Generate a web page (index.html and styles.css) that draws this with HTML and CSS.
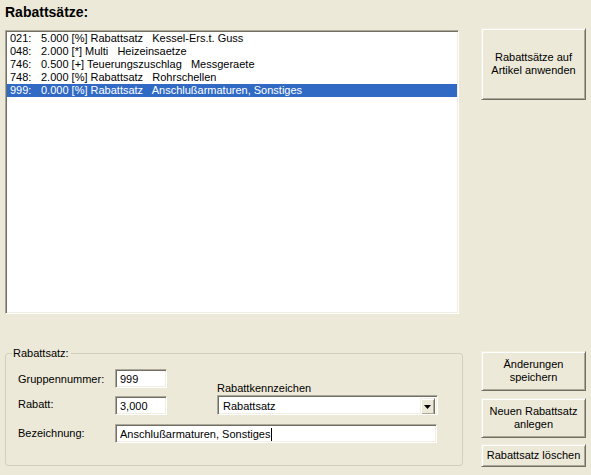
FILE: index.html
```html
<!DOCTYPE html>
<html>
<head>
    <title>Rabattsätze</title>
    <link rel="stylesheet" href="styles.css">
</head>
<body>
    <div class="window">
        <h1 class="title">Rabattsätze:</h1>

        <div class="top">
            <div class="listbox">
                <div class="item"><span class="code">021:</span>5.000 [%] Rabattsatz   Kessel-Ers.t. Guss</div>
                <div class="item"><span class="code">048:</span>2.000 [*] Multi   Heizeinsaetze</div>
                <div class="item"><span class="code">746:</span>0.500 [+] Teuerungszuschlag   Messgeraete</div>
                <div class="item"><span class="code">748:</span>2.000 [%] Rabattsatz   Rohrschellen</div>
                <div class="item selected"><span class="code">999:</span>0.000 [%] Rabattsatz   Anschlußarmaturen, Sonstiges</div>
            </div>
            <div class="side">
                <button class="btn apply">Rabattsätze auf<br>Artikel anwenden</button>
            </div>
        </div>

        <div class="bottom">
            <fieldset class="group">
                <legend>Rabattsatz:</legend>
                <div class="form">
                    <div class="lbl lbl-nr">Gruppennummer:</div>
                    <div class="field">999</div>
                    <div class="lbl lbl-kz">Rabattkennzeichen</div>

                    <div class="lbl lbl-rabatt">Rabatt:</div>
                    <div class="field">3,000</div>
                    <div class="combo">
                        <span class="combo-text">Rabattsatz</span>
                        <span class="combo-btn">
                            <svg width="7" height="4" viewBox="0 0 7 4"><path d="M0 0h7L3.5 4z" fill="#000"/></svg>
                        </span>
                    </div>

                    <div class="lbl lbl-bez">Bezeichnung:</div>
                    <div class="field wide">Anschlußarmaturen, Sonstiges<span class="caret"></span></div>
                </div>
            </fieldset>

            <div class="side actions">
                <button class="btn tall">Änderungen<br>speichern</button>
                <button class="btn tall">Neuen Rabattsatz<br>anlegen</button>
                <button class="btn small">Rabattsatz löschen</button>
            </div>
        </div>
    </div>
</body>
</html>
```

FILE: styles.css
```css
body {
    margin: 0;
    background-color: #ece9d8;
    font-family: "Liberation Sans", Arial, sans-serif;
    font-size: 11px;
    line-height: 13px;
    color: #000;
}

.window {
    width: 591px;
    height: 475px;
    padding: 0 5px;
    box-sizing: border-box;
}

.title {
    margin: 0;
    height: 28px;
    padding: 5px 0 0 0;
    box-sizing: border-box;
    font-size: 14px;
    line-height: 15px;
    font-weight: bold;
}

/* top part: list + apply button */

.top {
    display: flex;
    align-items: flex-start;
}

.listbox {
    width: 454px;
    height: 284px;
    margin-top: 2px;
    box-sizing: border-box;
    background-color: #fff;
    border: 1px solid;
    border-color: #aca899 #fff #fff #aca899;
    box-shadow: inset 1px 1px #716f64, inset -1px -1px #f1efe2;
    padding: 1px 1px 0 1px;
    overflow: hidden;
}

.item {
    height: 13px;
    padding-left: 3px;
    white-space: pre;
}

.item.selected {
    background-color: #316ac5;
    color: #fff;
}

.code {
    display: inline-block;
    width: 31px;
}

.top .side {
    margin-left: 22px;
}

/* classic raised button */

.btn {
    display: block;
    width: 105px;
    padding: 0;
    font-family: inherit;
    font-size: 11px;
    line-height: 13px;
    color: #000;
    text-align: center;
    background-color: #ece9d8;
    border: 1px solid;
    border-color: #f1efe2 #716f64 #716f64 #f1efe2;
    box-shadow: inset 1px 1px #fff, inset -1px -1px #aca899;
}

.btn.apply {
    height: 72px;
}

.btn.tall {
    height: 40px;
}

.btn.small {
    height: 23px;
}

/* bottom part: group box + action buttons */

.bottom {
    display: flex;
    align-items: flex-start;
    margin-top: 33px;
}

.group {
    width: 458px;
    margin: 0;
    padding: 9px 0 23px 6px;
    box-sizing: border-box;
    border: 1px solid #d0d0bf;
    border-radius: 3px;
}

.group legend {
    padding: 0 2px 0 1px;
    line-height: 13px;
}

.form {
    display: grid;
    grid-template-columns: 97px 52px 50px 221px;
    grid-template-rows: 19px 19px 19px;
    row-gap: 8px;
    margin-left: 6px;
}

.lbl {
    white-space: nowrap;
}

.lbl-nr {
    padding-top: 4px;
}

.lbl-kz {
    grid-column: 4;
    padding-top: 13px;
}

.lbl-rabatt {
    padding-top: 2px;
}

.lbl-bez {
    padding-top: 3px;
    margin-top: 1px;
}

.field,
.combo {
    box-sizing: border-box;
    background-color: #fff;
    border: 1px solid;
    border-color: #aca899 #fff #fff #aca899;
    box-shadow: inset 1px 1px #716f64, inset -1px -1px #f1efe2;
    white-space: nowrap;
    overflow: hidden;
}

.field {
    height: 19px;
    padding: 3px 0 0 4px;
}

.field.wide {
    grid-column: 2 / 5;
    width: 322px;
    margin-top: 1px;
}

.caret {
    display: inline-block;
    width: 1px;
    height: 13px;
    margin-left: 1px;
    background-color: #000;
    vertical-align: top;
}

.combo {
    grid-column: 4;
    height: 20px;
    margin-top: -1px;
    display: flex;
    align-items: flex-start;
    padding: 2px 2px 0 5px;
}

.combo-text {
    flex: 1;
    padding-top: 2px;
}

.combo-btn {
    width: 15px;
    height: 17px;
    box-sizing: border-box;
    display: flex;
    align-items: center;
    justify-content: center;
    background-color: #ece9d8;
    border: 1px solid;
    border-color: #f1efe2 #716f64 #716f64 #f1efe2;
    box-shadow: inset 1px 1px #fff, inset -1px -1px #aca899;
}

.actions {
    margin-left: 18px;
    margin-top: 4px;
}

.actions .btn + .btn {
    margin-top: 7px;
}

.actions .btn.small {
    margin-top: 6px;
}
```
